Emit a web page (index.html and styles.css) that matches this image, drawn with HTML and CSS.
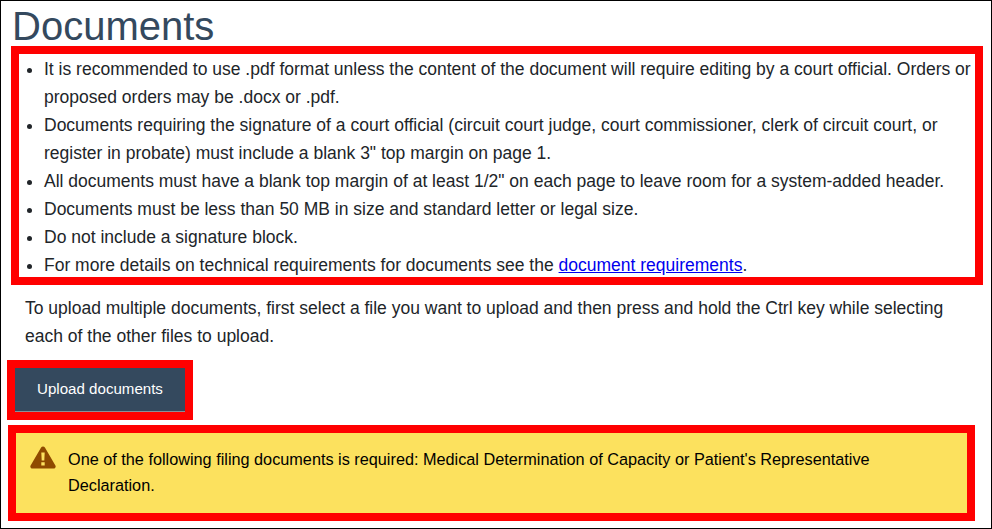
FILE: index.html
```html
<!DOCTYPE html>
<html lang="en">

<head>
    <meta charset="UTF-8">
    <meta name="viewport" content="width=device-width, initial-scale=1.0">
    <title>Documents</title>
    <link rel="stylesheet" href="styles.css">
</head>

<body>
    <div class="page">
        <h1 class="title">Documents</h1>
        <ul class="requirements">
            <li>It is recommended to use .pdf format unless the content of the document will require editing by a court official. Orders or proposed orders may be .docx or .pdf.</li>
            <li>Documents requiring the signature of a court official (circuit court judge, court commissioner, clerk of circuit court, or register in probate) must include a blank 3" top margin on page 1.</li>
            <li>All documents must have a blank top margin of at least 1/2" on each page to leave room for a system-added header.</li>
            <li>Documents must be less than 50 MB in size and standard letter or legal size.</li>
            <li>Do not include a signature block.</li>
            <li>For more details on technical requirements for documents see the <a href="#">document requirements</a>.</li>
        </ul>
        <p class="hint">To upload multiple documents, first select a file you want to upload and then press and hold the Ctrl key while selecting each of the other files to upload.</p>
        <div class="upload-box">
            <button class="upload-btn" type="button">Upload documents</button>
        </div>
        <div class="alert">
            <svg class="alert-icon" viewBox="0 0 26 23" width="26" height="23">
                <path fill="#8f4a00" fill-rule="evenodd" d="M13 0.5c.8 0 1.5.4 1.900 1.100l10.500 17.800c.8 1.400-.2 3.100-1.900 3.100H2.500c-1.700 0-2.700-1.700-1.900-3.100L11.100 1.600C11.500.9 12.200.5 13 .5zM11.300 6.500l.4 8h2.600l.4-8zM11.300 16.200v3.300h3.400v-3.300z"/>
            </svg>
            <p class="alert-text">One of the following filing documents is required: Medical Determination of Capacity or Patient's Representative Declaration.</p>
        </div>
    </div>
</body>

</html>
```

FILE: styles.css
```css
* {
    box-sizing: border-box;
}

body {
    margin: 0;
    padding: 0;
    background-color: #fff;
    font-family: "Liberation Sans", Arial, sans-serif;
    color: #212529;
}

.page {
    width: 992px;
    height: 529px;
    border: 1px solid #000;
    overflow: hidden;
}

.title {
    margin: 0 0 0 11px;
    height: 45px;
    font-size: 40px;
    line-height: 50px;
    font-weight: 400;
    color: #34495e;
}

.requirements {
    margin: 0 8px 0 10px;
    padding: 1px 0 0 25px;
    height: 239px;
    border: 8px solid #f00;
    font-size: 17.500px;
    line-height: 28px;
    list-style: disc;
}

.requirements a {
    color: #00e;
}

.hint {
    margin: 9px 31px 0 24px;
    font-size: 17.500px;
    line-height: 28px;
}

.upload-box {
    margin: 10px 0 0 6px;
    width: 186px;
    border: 8px solid #f00;
}

.upload-btn {
    display: block;
    width: 170px;
    height: 44px;
    padding: 0 0 2px;
    border: 0;
    border-bottom: 1px solid #8a8f99;
    background-color: #34495e;
    color: #fff;
    font-family: inherit;
    font-size: 15.100px;
}

.alert {
    display: flex;
    align-items: flex-start;
    gap: 12px;
    margin: 5px 16px 0 7px;
    height: 96px;
    padding: 13px 60px 0 14px;
    border: 8px solid #f00;
    background-color: #fce15e;
}

.alert-icon {
    flex-shrink: 0;
}

.alert-text {
    margin: 0;
    font-size: 16.250px;
    line-height: 26px;
    color: #000;
}
```
